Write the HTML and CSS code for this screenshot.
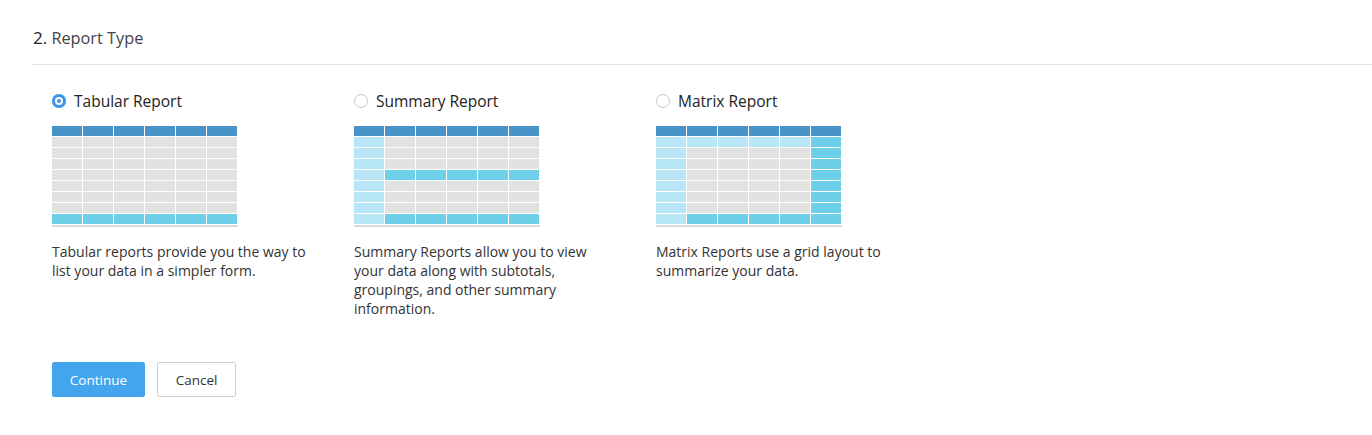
FILE: index.html
```html
<!DOCTYPE html>
<html>
<head>
<meta charset="utf-8">
<link rel="stylesheet" href="styles.css">
</head>
<body>
<div class="section">
  <div class="section-head"><span class="num">2.</span> Report Type</div>
  <div class="body">
    <div class="options">
      <div class="option">
        <div class="label"><span class="radio checked"></span>Tabular Report</div>
        <div class="thumb">
          <div class="cells">
            <i class="h"></i><i class="h"></i><i class="h"></i><i class="h"></i><i class="h"></i><i class="h"></i>
            <i class="g"></i><i class="g"></i><i class="g"></i><i class="g"></i><i class="g"></i><i class="g"></i>
            <i class="g"></i><i class="g"></i><i class="g"></i><i class="g"></i><i class="g"></i><i class="g"></i>
            <i class="g"></i><i class="g"></i><i class="g"></i><i class="g"></i><i class="g"></i><i class="g"></i>
            <i class="g"></i><i class="g"></i><i class="g"></i><i class="g"></i><i class="g"></i><i class="g"></i>
            <i class="g"></i><i class="g"></i><i class="g"></i><i class="g"></i><i class="g"></i><i class="g"></i>
            <i class="g"></i><i class="g"></i><i class="g"></i><i class="g"></i><i class="g"></i><i class="g"></i>
            <i class="g"></i><i class="g"></i><i class="g"></i><i class="g"></i><i class="g"></i><i class="g"></i>
            <i class="c"></i><i class="c"></i><i class="c"></i><i class="c"></i><i class="c"></i><i class="c"></i>
          </div>
          <div class="bar"></div>
        </div>
        <p class="desc">Tabular reports provide you the way to list your data in a simpler form.</p>
      </div>
      <div class="option">
        <div class="label"><span class="radio"></span>Summary Report</div>
        <div class="thumb">
          <div class="cells">
            <i class="h"></i><i class="h"></i><i class="h"></i><i class="h"></i><i class="h"></i><i class="h"></i>
            <i class="l"></i><i class="g"></i><i class="g"></i><i class="g"></i><i class="g"></i><i class="g"></i>
            <i class="l"></i><i class="g"></i><i class="g"></i><i class="g"></i><i class="g"></i><i class="g"></i>
            <i class="l"></i><i class="g"></i><i class="g"></i><i class="g"></i><i class="g"></i><i class="g"></i>
            <i class="l"></i><i class="c"></i><i class="c"></i><i class="c"></i><i class="c"></i><i class="c"></i>
            <i class="l"></i><i class="g"></i><i class="g"></i><i class="g"></i><i class="g"></i><i class="g"></i>
            <i class="l"></i><i class="g"></i><i class="g"></i><i class="g"></i><i class="g"></i><i class="g"></i>
            <i class="l"></i><i class="g"></i><i class="g"></i><i class="g"></i><i class="g"></i><i class="g"></i>
            <i class="l"></i><i class="c"></i><i class="c"></i><i class="c"></i><i class="c"></i><i class="c"></i>
          </div>
          <div class="bar"></div>
        </div>
        <p class="desc">Summary Reports allow you to view your data along with subtotals, groupings, and other summary information.</p>
      </div>
      <div class="option">
        <div class="label"><span class="radio"></span>Matrix Report</div>
        <div class="thumb">
          <div class="cells">
            <i class="h"></i><i class="h"></i><i class="h"></i><i class="h"></i><i class="h"></i><i class="h"></i>
            <i class="l"></i><i class="l"></i><i class="l"></i><i class="l"></i><i class="l"></i><i class="c"></i>
            <i class="l"></i><i class="g"></i><i class="g"></i><i class="g"></i><i class="g"></i><i class="c"></i>
            <i class="l"></i><i class="g"></i><i class="g"></i><i class="g"></i><i class="g"></i><i class="c"></i>
            <i class="l"></i><i class="g"></i><i class="g"></i><i class="g"></i><i class="g"></i><i class="c"></i>
            <i class="l"></i><i class="g"></i><i class="g"></i><i class="g"></i><i class="g"></i><i class="c"></i>
            <i class="l"></i><i class="g"></i><i class="g"></i><i class="g"></i><i class="g"></i><i class="c"></i>
            <i class="l"></i><i class="g"></i><i class="g"></i><i class="g"></i><i class="g"></i><i class="c"></i>
            <i class="l"></i><i class="c"></i><i class="c"></i><i class="c"></i><i class="c"></i><i class="c"></i>
          </div>
          <div class="bar"></div>
        </div>
        <p class="desc">Matrix Reports use a grid layout to summarize your data.</p>
      </div>
    </div>
    <div class="actions">
      <button class="btn primary">Continue</button>
      <button class="btn secondary">Cancel</button>
    </div>
  </div>
</div>
</body>
</html>
```

FILE: styles.css
```css
* { box-sizing: border-box; }
html, body { margin: 0; padding: 0; background: #fff; }
body {
  font-family: "Open Sans", Lato, "Liberation Sans", sans-serif;
  color: #333;
}
.section { padding-left: 32px; }
.section-head {
  padding: 26px 0 14px 1px;
  line-height: 24px;
  font-size: 16.3px;
  color: #444;
  border-bottom: 1px solid #e2e2e2;
}
.section-head .num { color: #222; font-size: 17px; }
.body { padding-left: 20px; padding-top: 26px; }
.options { display: flex; gap: 44px; }
.option { width: 258px; }
.label {
  display: flex;
  align-items: center;
  gap: 8px;
  height: 20px;
  font-size: 15.5px;
  color: #222;
}
.radio {
  width: 14px;
  height: 14px;
  border-radius: 50%;
  border: 1px solid #c6c6c6;
  background: #fff;
  flex: none;
}
.radio.checked {
  border: none;
  background: #3b95e6;
  box-shadow: inset 0 0 0 3px #3b95e6, inset 0 0 0 5px #fff;
}
.thumb { margin-top: 15px; width: 186px; }
.cells {
  display: grid;
  grid-template-columns: repeat(6, 30px);
  grid-auto-rows: 10px;
  gap: 1px;
}
.cells i { display: block; }
.cells .h { background: #4a93c9; }
.cells .g { background: #e1e1e1; }
.cells .c { background: #6ecfe9; }
.cells .l { background: #b7e6f6; }
.bar { margin-top: 1px; height: 2px; background: #dadada; }
.desc {
  margin: 15px 0 0;
  font-size: 14px;
  line-height: 19px;
  color: #333;
}
.actions { margin-top: 44px; display: flex; gap: 12px; }
.btn {
  font-family: inherit;
  font-size: 13.5px;
  height: 35px;
  border-radius: 2px;
  cursor: pointer;
}
.btn.primary {
  width: 93px;
  background: #44a5ef;
  border: 1px solid #44a5ef;
  color: #fff;
}
.btn.secondary {
  width: 79px;
  background: #fff;
  border: 1px solid #cfcfcf;
  color: #333;
}
```
